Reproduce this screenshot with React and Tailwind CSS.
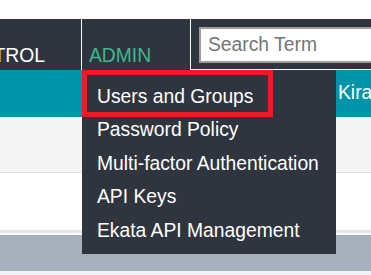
import { useState } from 'react'

const adminLinks = [
  'Users and Groups',
  'Password Policy',
  'Multi-factor Authentication',
  'API Keys',
  'Ekata API Management',
]

function App() {
  const [term, setTerm] = useState('')

  return (
    <div className="w-[371px] h-[275px] overflow-hidden bg-white font-['Liberation_Sans',Arial,sans-serif] text-[19.3px]">
      <div className="h-[19px] bg-white"></div>
      <nav className="flex h-[51px] bg-[#2f353f] leading-[22px]">
        <div className="w-[82px] shrink-0 flex justify-end overflow-hidden whitespace-nowrap border-r border-white pr-[36px] pt-[26px] text-white">CONTROL</div>
        <div className="relative w-[109px] shrink-0 border-r border-white pl-[7px] pt-[26px] text-[#3fb68e]">
          ADMIN
          <div className="absolute left-0 top-full z-10 w-[254px] h-[184px] bg-[#2f353f] pt-[10px] pl-[15px] text-white leading-[33.4px] whitespace-nowrap">
            {adminLinks.map(link => (
              <div key={link}>{link}</div>
            ))}
            <div className="absolute left-0 top-0 w-[191px] h-[47px] border-[5px] border-[#ed1c24]"></div>
          </div>
        </div>
        <div className="flex-1 overflow-hidden border-b border-white pl-[8px] pt-[8px]">
          <input
            className="w-[220px] h-[36px] border-2 border-[#a29d99] bg-white px-[7px] text-[19.3px] text-gray-800 outline-none placeholder:text-[#757575]"
            type="text"
            placeholder="Search Term"
            value={term}
            onChange={e => setTerm(e.target.value)}
          />
        </div>
      </nav>
      <div className="h-[47px] bg-[#0094a8] pl-[338px] pt-[12px] leading-[22px] text-white whitespace-nowrap overflow-hidden">Kira</div>
      <div className="h-[56px] bg-[#f4f4f4] border-b border-[#dde1e7]"></div>
      <div className="h-[57px] bg-white"></div>
      <div className="h-[3px] bg-[#e4e6ea]"></div>
      <div className="h-[2px] bg-white"></div>
      <div className="h-[36px] bg-[#a7b1bd]"></div>
      <div className="h-[4px] bg-[#f0f2f4]"></div>
    </div>
  )
}

export default App
